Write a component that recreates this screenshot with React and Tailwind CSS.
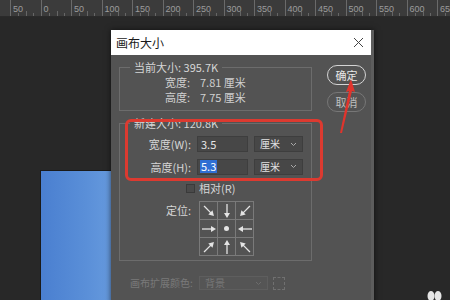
import React from "react";

const rulerMarks = ["50", "0", "50", "100", "150", "200", "250", "300", "350", "400", "450", "500", "550", "600", "650"];

// === Ruler ===
function Ruler() {
  return (
    <div className="flex h-[17px] bg-[#3b3b3b] pl-[10px] border-b border-[#2a2a2a]">
      {rulerMarks.map((m, i) => (
        <div key={i} className="relative shrink-0 w-[30.5px] h-full border-l border-[#6a6a6a] flex items-start">
          <span className="pl-[2px] pt-[4px] text-[9px] leading-[10px] text-[#9c9c9c] font-['Liberation_Sans',sans-serif]">
            {m}
          </span>
          <div className="absolute bottom-0 left-[7px] w-px h-[3px] bg-[#666]" />
          <div className="absolute bottom-0 left-[15px] w-px h-[5px] bg-[#666]" />
          <div className="absolute bottom-0 left-[22px] w-px h-[3px] bg-[#666]" />
        </div>
      ))}
    </div>
  );
}

// === Anchor arrow ===
function Arrow({ rot }) {
  return (
    <svg width="16" height="16" viewBox="0 0 16 16" className={rot}>
      <line x1="1" y1="8" x2="11" y2="8" stroke="#e4e4e4" strokeWidth="1.3" />
      <polygon points="15,8 10,5 10,11" fill="#e4e4e4" />
    </svg>
  );
}

function AnchorGrid() {
  const cells = [
    "rotate-45", "rotate-90", "rotate-135",
    "rotate-0", null, "rotate-180",
    "-rotate-45", "-rotate-90", "-rotate-135",
  ];
  return (
    <div className="grid grid-cols-3 w-[55px] h-[55px] border-t border-l border-[#7a7a7a]">
      {cells.map((r, i) => (
        <div key={i} className="w-[18px] h-[18px] border-r border-b border-[#7a7a7a] flex items-center justify-center overflow-visible">
          {r ? <Arrow rot={r} /> : <div className="w-[5px] h-[5px] rounded-full bg-[#e4e4e4]" />}
        </div>
      ))}
    </div>
  );
}

function Select({ label, w, disabled }) {
  return (
    <div
      className={`flex items-center justify-between px-[5px] border ${w} ${
        disabled ? "h-[14px] bg-[#555] border-[#5e5e5e] text-[#777]" : "h-[16px] bg-[#474747] border-[#3e3e3e] text-[#e2e2e2]"
      }`}
    >
      <span className="text-[10px] leading-none">{label}</span>
      <svg width="7" height="5" viewBox="0 0 7 5">
        <path d="M1 1 L3.5 3.5 L6 1" fill="none" stroke={disabled ? "#6c6c6c" : "#aaa"} strokeWidth="1" />
      </svg>
    </div>
  );
}

// === Dialog ===
function CanvasSizeDialog() {
  return (
    <div className="absolute left-[111px] top-[30px] w-[263px] h-[275px] bg-[#535353] border-r-[3px] border-[#5d5d5d] shadow-[0_0_6px_rgba(0,0,0,0.6)]">
      <div className="h-[25px] bg-white flex items-center justify-between pl-[5px] pr-[7px]">
        <span className="text-[12px] text-[#1b1b1b]">画布大小</span>
        <svg width="11" height="11" viewBox="0 0 11 11">
          <path d="M1 1 L10 10 M10 1 L1 10" stroke="#444" strokeWidth="1" />
        </svg>
      </div>

      <div className="flex pl-[8px] pt-[5px]">
        <div className="w-[193px] flex flex-col">
          {/* current size */}
          <fieldset className="border border-[#6c6c6c] pb-[6px]">
            <legend className="ml-[10px] px-[4px] text-[11px] leading-[14px] text-[#d6d6d6]">当前大小: 395.7K</legend>
            <div className="flex flex-col gap-[1px] mt-[1px] text-[11px] leading-[14px] text-[#d0d0d0]">
              <div className="flex">
                <span className="w-[70px] text-right">宽度:</span>
                <span className="ml-[10px]">7.81 厘米</span>
              </div>
              <div className="flex">
                <span className="w-[70px] text-right">高度:</span>
                <span className="ml-[10px]">7.75 厘米</span>
              </div>
            </div>
          </fieldset>

          {/* new size */}
          <fieldset className="mt-[5px] border border-[#6c6c6c] pb-[4px]">
            <legend className="ml-[10px] px-[4px] text-[11px] leading-[14px] text-[#d6d6d6]">新建大小: 120.8K</legend>
            <div className="flex items-center mt-[6px] text-[11px] text-[#d6d6d6]">
              <span className="w-[71px] text-right">宽度(W):</span>
              <div className="ml-[6px] w-[51px] h-[16px] bg-[#474747] border border-[#3e3e3e] flex items-center pl-[3px] text-[11px] text-[#e6e6e6]">
                3.5
              </div>
              <div className="ml-[6px]">
                <Select label="厘米" w="w-[49px]" />
              </div>
            </div>
            <div className="flex items-center mt-[6px] text-[11px] text-[#d6d6d6]">
              <span className="w-[71px] text-right">高度(H):</span>
              <div className="ml-[6px] w-[51px] h-[16px] bg-[#474747] border border-[#3e3e3e] flex items-center pl-[2px]">
                <span className="bg-[#2f6fd3] text-white text-[11px] leading-[13px] px-px">5.3</span>
              </div>
              <div className="ml-[6px]">
                <Select label="厘米" w="w-[49px]" />
              </div>
            </div>
            <div className="flex items-center mt-[6px] pl-[66px] h-[14px]">
              <div className="w-[9px] h-[9px] bg-[#4a4a4a] border border-[#3a3a3a]" />
              <span className="ml-[4px] text-[11px] text-[#d6d6d6]">相对(R)</span>
            </div>
            <div className="flex items-start mt-[6px]">
              <span className="w-[71px] text-right text-[11px] leading-[14px] mt-[2px] text-[#d6d6d6]">定位:</span>
              <div className="ml-[8px]">
                <AnchorGrid />
              </div>
            </div>
          </fieldset>

          {/* extension colour (disabled) */}
          <div className="flex items-center mt-[15px] pl-[11px]">
            <span className="w-[62px] text-[10px] leading-none text-[#7a7a7a] whitespace-nowrap">画布扩展颜色:</span>
            <div className="ml-[7px]">
              <Select label="背景" w="w-[69px]" disabled />
            </div>
            <div className="ml-[5px] w-[12px] h-[13px] border border-dashed border-[#707070]" />
          </div>
        </div>

        {/* buttons */}
        <div className="ml-[15px] mt-[5px] flex flex-col gap-[7px]">
          <button className="w-[39px] h-[20px] rounded-full border border-[#d4d4d4] text-[11px] text-[#e8e8e8] flex items-center justify-center">
            确定
          </button>
          <button className="w-[39px] h-[20px] rounded-full border border-[#777] text-[11px] text-[#bdbdbd] flex items-center justify-center">
            取消
          </button>
        </div>
      </div>
    </div>
  );
}

export default function App() {
  return (
    <div className="relative w-[450px] h-[300px] overflow-hidden bg-[#282828] font-['Noto_Sans_CJK_SC','Noto_Sans',sans-serif]">
      <Ruler />
      {/* document canvas */}
      <div className="ml-[41px] mt-[154px] w-[90px] h-[140px] bg-linear-to-r from-[#4a7fd0] via-[#5a8fd8] to-[#6fa2e2] shadow-[0_0_0_1px_#1a1a1a]" />

      <CanvasSizeDialog />

      {/* annotation: red box */}
      <div className="absolute left-[125px] top-[119px] w-[198px] h-[62px] border-[3px] border-[#dc3a30] rounded-[6px]" />
      {/* annotation: red arrow */}
      <svg className="absolute left-[330px] top-[75px]" width="30" height="65" viewBox="0 0 30 65">
        <polygon points="21,4 25,17 22,16 12,58 10,58 19,16 16,17" fill="#e0342c" />
      </svg>

      {/* watermark */}
      <svg className="absolute left-[424px] top-[287px]" width="20" height="13" viewBox="0 0 20 13">
        <ellipse cx="7" cy="9" rx="3.5" ry="5" fill="#e6e6e6" />
        <ellipse cx="14" cy="9" rx="3.5" ry="5" fill="#e6e6e6" />
      </svg>
    </div>
  );
}
